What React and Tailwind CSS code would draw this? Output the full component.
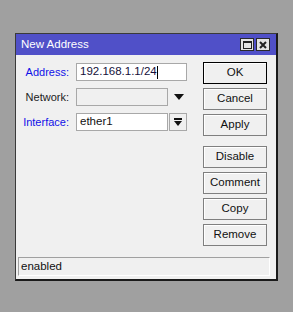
import React from 'react';

const font = { fontFamily: '"Liberation Sans", Arial, sans-serif' };

const Btn = ({ label, primary }) => (
  <button
    className={
      primary
        ? 'w-[64px] h-[22px] border border-black bg-[#f0f0f0] shadow-[inset_1px_1px_0_#ffffff] text-[11.5px] text-[#111]'
        : 'w-[64px] h-[22px] border border-[#7f7f7f] bg-[#f0f0f0] shadow-[inset_1px_1px_0_#ffffff] text-[11.5px] text-[#111]'
    }
  >
    {label}
  </button>
);

const App = () => {
  return (
    <div className="w-[293px] h-[312px] bg-[#a0a0a0] pt-[33px] pl-[15px]" style={font}>
      <div className="w-[263px] h-[248px] border-l border-t border-[#3a3a3a] border-r-2 border-b-2 border-r-[#1a1a1a] border-b-[#1a1a1a] bg-[#f0f0f0] flex flex-col">
        {/* Title bar */}
        <div className="h-[21px] bg-[#5050c8] flex items-center justify-between pl-[5px] pr-[6px]">
          <span className="text-white text-[11.5px] leading-none">New Address</span>
          <div className="flex items-center gap-[2px]">
            <div className="w-[14px] h-[13px] border border-[#2a2a2a] bg-[#e4e4e4] flex items-center justify-center">
              <div className="w-[9px] h-[8px] border border-[#222] border-t-2"></div>
            </div>
            <div className="w-[14px] h-[13px] border border-[#2a2a2a] bg-[#e4e4e4] flex items-center justify-center">
              <svg width="8" height="8" viewBox="0 0 8 8">
                <path d="M1 1 L7 7 M7 1 L1 7" stroke="#222" strokeWidth="2" />
              </svg>
            </div>
          </div>
        </div>

        {/* Body */}
        <div className="h-[202px] flex justify-between">
          <div className="pt-[8px] flex flex-col gap-[7px]">
            <div className="flex items-center h-[18px]">
              <span className="w-[53px] text-right text-[11px] text-[#1010e8]">Address:</span>
              <div className="ml-[7px] w-[111px] h-[18px] border border-[#a8a8a8] bg-white flex items-center pl-[3px] text-[11.5px] text-[#14103a]">
                192.168.1.1/24
                <span className="w-px h-[13px] bg-black"></span>
              </div>
            </div>
            <div className="flex items-center h-[18px]">
              <span className="w-[53px] text-right text-[11px] text-[#222]">Network:</span>
              <div className="ml-[7px] w-[92px] h-[18px] border border-[#a8a8a8] bg-[#f0f0f0]"></div>
              <svg className="ml-[6px]" width="10" height="6" viewBox="0 0 10 6">
                <polygon points="0,0 10,0 5,6" fill="#111" />
              </svg>
            </div>
            <div className="flex items-center h-[18px]">
              <span className="w-[53px] text-right text-[11px] text-[#1010e8]">Interface:</span>
              <div className="ml-[7px] w-[92px] h-[18px] border border-[#a8a8a8] bg-white flex items-center pl-[3px] text-[11.5px] text-[#111]">
                ether1
              </div>
              <div className="ml-px w-[18px] h-[18px] border border-[#a8a8a8] bg-[#f0f0f0] flex items-center justify-center">
                <svg width="8" height="9" viewBox="0 0 8 9">
                  <rect x="0" y="0" width="8" height="2" fill="#111" />
                  <polygon points="0,3 8,3 4,8" fill="#111" />
                </svg>
              </div>
            </div>
          </div>

          <div className="pt-[7px] pr-[9px] flex flex-col gap-[4px]">
            <Btn label="OK" primary />
            <Btn label="Cancel" />
            <Btn label="Apply" />
            <div className="h-[2px]"></div>
            <Btn label="Disable" />
            <Btn label="Comment" />
            <Btn label="Copy" />
            <Btn label="Remove" />
          </div>
        </div>

        {/* Status bar */}
        <div className="ml-[2px] mr-[6px] h-[19px] border-t border-l border-[#a0a0a0] border-r border-b border-r-white border-b-white flex items-center pl-[2px] text-[11.5px] text-[#111]">
          enabled
        </div>
      </div>
    </div>
  );
};

export default App;
